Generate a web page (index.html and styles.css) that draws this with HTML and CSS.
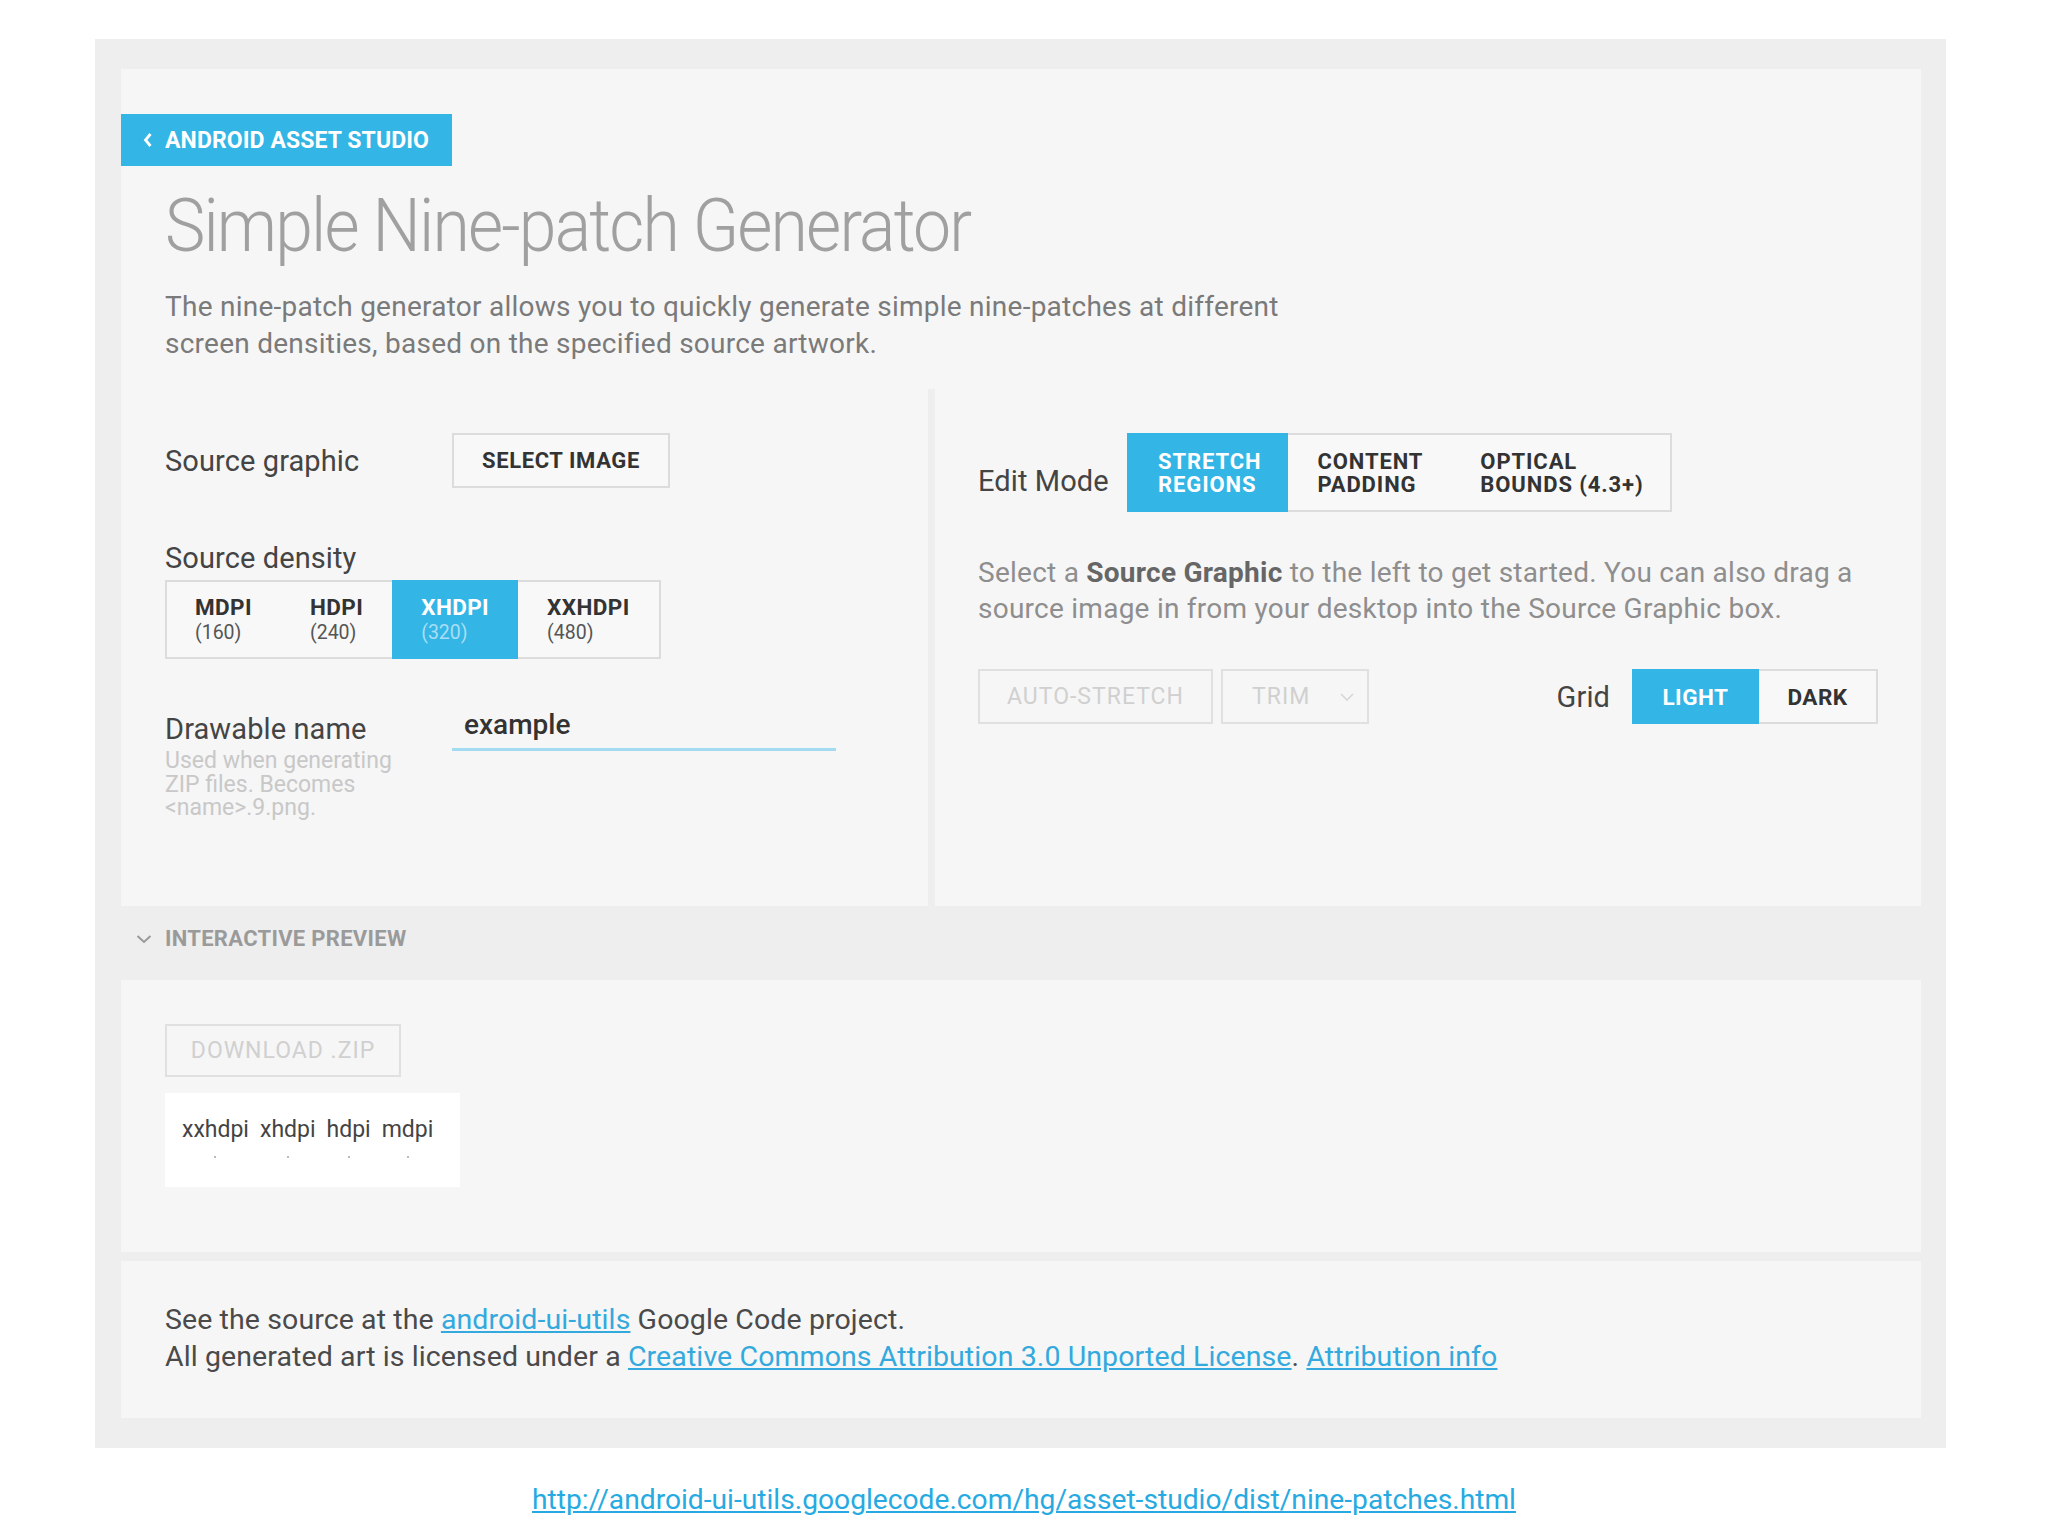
FILE: index.html
```html
<!DOCTYPE html>
<html lang="en">
<head>
<meta charset="utf-8">
<title>Simple Nine-patch Generator</title>
<link rel="stylesheet" href="styles.css">
</head>
<body>
<div class="frame">
  <section class="card top-card">
    <header class="head">
      <a class="back" href="#"><svg class="back-icon" viewBox="0 0 10 16" width="10" height="16"><path d="M7.5 2 L2.5 8 L7.5 14" fill="none" stroke="#fff" stroke-width="2.8"/></svg>ANDROID ASSET STUDIO</a>
      <h1 class="title">Simple Nine-patch Generator</h1>
      <p class="intro">The nine-patch generator allows you to quickly generate simple nine-patches at different screen densities, based on the specified source artwork.</p>
    </header>
    <div class="cols">
      <div class="col col-left">
        <div class="field field-source">
          <div class="label">Source graphic</div>
          <button class="btn">SELECT IMAGE</button>
        </div>
        <div class="field-density">
          <div class="label">Source density</div>
          <div class="seg seg-density">
            <div class="seg-item"><b>MDPI</b><span>(160)</span></div>
            <div class="seg-item"><b>HDPI</b><span>(240)</span></div>
            <div class="seg-item on"><b>XHDPI</b><span>(320)</span></div>
            <div class="seg-item"><b>XXHDPI</b><span>(480)</span></div>
          </div>
        </div>
        <div class="field field-name">
          <div class="label-group">
            <div class="label">Drawable name</div>
            <div class="help">Used when generating ZIP files. Becomes &lt;name&gt;.9.png.</div>
          </div>
          <div class="text-input">example</div>
        </div>
      </div>
      <div class="col col-right">
        <div class="edit-row">
          <div class="label edit-label">Edit Mode</div>
          <div class="seg seg-mode">
            <div class="mode-item on"><span>STRETCH</span><span>REGIONS</span></div>
            <div class="mode-item"><span>CONTENT</span><span>PADDING</span></div>
            <div class="mode-item"><span>OPTICAL</span><span>BOUNDS (4.3+)</span></div>
          </div>
        </div>
        <p class="hint"><span>Select a </span><strong>Source Graphic</strong><span> to the left to get started. You can also drag a</span><br><span>source image in from your desktop into the Source Graphic box.</span></p>
        <div class="tool-row">
          <div class="tools">
            <button class="btn disabled auto">AUTO-STRETCH</button>
            <button class="btn disabled trim">TRIM<svg class="trim-caret" viewBox="0 0 14 8" width="14" height="8"><path d="M1 1 L7 7 L13 1" fill="none" stroke="#d6d6d6" stroke-width="1.6"/></svg></button>
          </div>
          <div class="grid-ctl">
            <div class="label">Grid</div>
            <div class="seg seg-grid">
              <div class="grid-item on">LIGHT</div>
              <div class="grid-item">DARK</div>
            </div>
          </div>
        </div>
      </div>
    </div>
  </section>
  <div class="band"><svg class="band-icon" viewBox="0 0 16 10" width="16" height="10"><path d="M1.5 2 L8 8 L14.5 2" fill="none" stroke="#9a9a9a" stroke-width="2"/></svg>INTERACTIVE PREVIEW</div>
  <section class="card preview-card">
    <button class="btn disabled download">DOWNLOAD .ZIP</button>
    <div class="preview-box">
      <div class="pv"><span>xxhdpi</span><i></i></div>
      <div class="pv"><span>xhdpi</span><i></i></div>
      <div class="pv"><span>hdpi</span><i></i></div>
      <div class="pv"><span>mdpi</span><i></i></div>
    </div>
  </section>
  <section class="card foot-card">
    <p class="foot">See the source at the <a href="#">android-ui-utils</a> Google Code project.<br>All generated art is licensed under a <a href="#">Creative Commons Attribution 3.0 Unported License</a>. <a href="#">Attribution info</a></p>
  </section>
</div>
<p class="url"><a href="#">http://android-ui-utils.googlecode.com/hg/asset-studio/dist/nine-patches.html</a></p>
</body>
</html>
```
FILE: styles.css
```css
html, body {
  margin: 0;
  padding: 0;
  background: #ffffff;
  font-family: Roboto, "Liberation Sans", sans-serif;
  color: #444;
}

.frame {
  margin: 39px 0 0 95px;
  width: 1851px;
  box-sizing: border-box;
  padding: 30px 25px 30px 26px;
  background: #eeeeee;
}

.card {
  background: #f6f6f6;
}

.top-card {
  background: transparent;
}

.head {
  background: #f6f6f6;
  padding: 45px 0 27px 0;
}

.back {
  display: inline-flex;
  align-items: center;
  height: 52px;
  width: 331px;
  box-sizing: border-box;
  padding-left: 22px;
  background: #33b5e5;
  color: #fff;
  text-decoration: none;
  font-weight: 700;
  font-size: 23px;
  letter-spacing: 0.1px;
}

.back-icon {
  margin-right: 12px;
}

.title {
  margin: 23px 0 0 44px;
  font-weight: 300;
  font-size: 74px;
  line-height: 74px;
  color: #a0a0a0;
  letter-spacing: -2px;
  transform: scaleX(0.918);
  transform-origin: left center;
}

.intro {
  margin: 25px 0 0 44px;
  width: 1140px;
  font-size: 28px;
  letter-spacing: 0.25px;
  line-height: 37px;
  color: #7a7a7a;
}

.cols {
  display: grid;
  grid-template-columns: 807px 986px;
  column-gap: 7px;
  height: 517px;
}

.col {
  background: #f6f6f6;
  box-sizing: border-box;
  padding-top: 44px;
}

.col-left {
  padding-left: 44px;
}

.col-right {
  padding-left: 43px;
  padding-right: 43px;
}

.label {
  font-size: 29px;
  line-height: 34px;
  letter-spacing: 0.1px;
  color: #444;
}

.field {
  display: flex;
  align-items: center;
}

.field > .label,
.field > .label-group {
  width: 287px;
  flex: none;
}

.btn {
  font-family: Roboto, "Liberation Sans", sans-serif;
  background: #f8f8f8;
  border: 2px solid #dcdcdc;
  color: #333;
  font-weight: 700;
  font-size: 22px;
  letter-spacing: 0.6px;
  padding: 0;
  margin: 0;
  box-sizing: border-box;
}

.field-source .btn {
  width: 218px;
  height: 55px;
}

.field-density {
  margin-top: 53px;
}

.seg {
  display: flex;
  border: 2px solid #dcdcdc;
  background: #f8f8f8;
  box-sizing: border-box;
}

.seg-density {
  margin-top: 5px;
  width: 496px;
  height: 79px;
}

.seg-item {
  display: flex;
  flex-direction: column;
  justify-content: center;
  padding: 0 29px;
  margin: -2px 0;
}

.seg-item:first-child {
  margin-left: -2px;
  padding-left: 30px;
}

.seg-item b {
  font-size: 22.5px;
  line-height: 25px;
  letter-spacing: 0.4px;
  color: #333;
  font-weight: 700;
}

.seg-item span {
  font-size: 19.5px;
  line-height: 25px;
  color: #555;
}

.seg-item.on {
  background: #33b5e5;
}

.seg-item.on b {
  color: #fff;
}

.seg-item.on span {
  color: #a8def4;
}

.field-name {
  margin-top: 53px;
  align-items: flex-start;
}

.help {
  margin-top: 3px;
  font-size: 23px;
  line-height: 23.5px;
  color: #c8c8c8;
  width: 240px;
}

.text-input {
  width: 384px;
  box-sizing: border-box;
  margin-top: -4px;
  padding: 0 0 6px 12px;
  font-size: 28px;
  line-height: 34px;
  font-weight: 500;
  color: #333;
  border-bottom: 3px solid #a3dbf3;
}

/* right column */
.edit-row {
  display: flex;
  align-items: flex-end;
}

.edit-label {
  width: 149px;
  flex: none;
  margin-bottom: 14px;
}

.seg-mode {
  height: 79px;
}

.mode-item {
  display: flex;
  flex-direction: column;
  justify-content: center;
  padding: 0 28px 0 29px;
  margin: -2px 0;
  font-size: 22px;
  line-height: 23px;
  letter-spacing: 0.9px;
  font-weight: 700;
  color: #333;
}

.mode-item:last-child {
  padding-right: 26px;
}

.mode-item.on {
  margin-left: -2px;
  padding: 0 27px 0 31px;
  background: #33b5e5;
  color: #fff;
}

.hint {
  margin: 43px 0 0 0;
  font-size: 28px;
  letter-spacing: 0.25px;
  line-height: 36px;
  color: #8e8e8e;
  white-space: nowrap;
}

.hint strong {
  color: #666;
  font-weight: 700;
}

.tool-row {
  margin-top: 42px;
  display: flex;
  justify-content: space-between;
  align-items: center;
}

.tools {
  display: flex;
  gap: 8px;
}

.btn.disabled {
  color: #d0d0d0;
  font-weight: 400;
  background: transparent;
  border-color: #e0e0e0;
  height: 55px;
  font-size: 23px;
  letter-spacing: 1px;
}

.auto {
  width: 235px;
}

.trim {
  width: 148px;
  display: flex;
  align-items: center;
  padding-left: 29px;
}

.trim-caret {
  margin-left: 30px;
}

.grid-ctl {
  display: flex;
  align-items: center;
  gap: 22px;
}

.seg-grid {
  height: 55px;
}

.grid-item {
  display: flex;
  align-items: center;
  justify-content: center;
  margin: -2px 0;
  font-size: 22.5px;
  letter-spacing: 0.5px;
  font-weight: 700;
  color: #333;
  width: 117px;
}

.grid-item.on {
  margin-left: -2px;
  width: 127px;
  background: #33b5e5;
  color: #fff;
}

/* band */
.band {
  height: 74px;
  box-sizing: border-box;
  padding: 0 0 9px 15px;
  display: flex;
  align-items: center;
  font-size: 22px;
  font-weight: 700;
  color: #9a9a9a;
  letter-spacing: 0.3px;
}

.band-icon {
  margin-right: 13px;
}

/* preview */
.preview-card {
  padding: 44px 44px 65px 44px;
}

.download {
  display: block;
  width: 236px;
  height: 53px !important;
}

.preview-box {
  margin-top: 16px;
  width: 295px;
  height: 94px;
  background: #ffffff;
  display: flex;
  padding: 22px 0 0 17px;
  box-sizing: border-box;
}

.pv {
  display: flex;
  flex-direction: column;
  align-items: center;
  margin-right: 11px;
}

.pv span {
  font-size: 23px;
  line-height: 30px;
  color: #444;
}

.pv i {
  display: block;
  width: 2px;
  height: 2px;
  margin-top: 11px;
  background: #bbb;
}

/* footer */
.foot-card {
  margin-top: 9px;
  padding: 40px 44px 43px 44px;
}

.foot {
  margin: 0;
  font-size: 28.5px;
  letter-spacing: 0.1px;
  line-height: 37px;
  color: #4a4a4a;
}

.foot a {
  color: #33a9dd;
  text-decoration: underline;
}

.url {
  margin: 33px 0 0 0;
  text-align: center;
  font-size: 28.2px;
  line-height: 37px;
}

.url a {
  color: #27aae1;
  text-decoration: underline;
}
```
